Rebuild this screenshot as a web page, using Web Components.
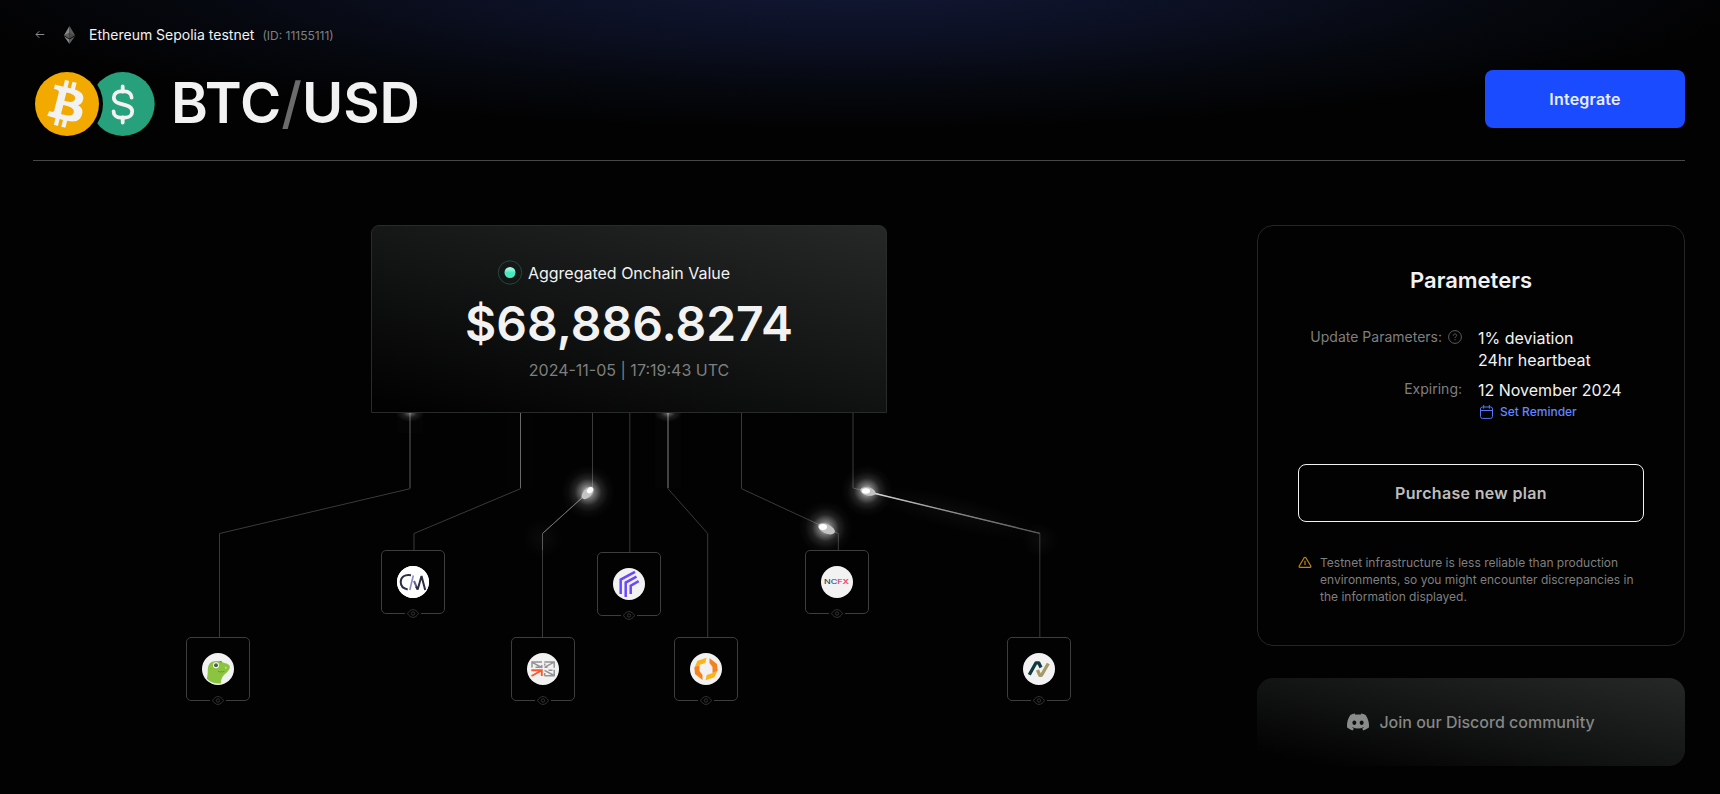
<!DOCTYPE html>
<html lang="en">
<head>
<meta charset="utf-8">
<title>BTC/USD</title>
<style>
html, body { margin: 0; background: #020202; }
body { font-family: Inter, "Liberation Sans", sans-serif; color: #f2f2f2; font-size: 16px; }
</style>
</head>
<body>
<feed-page></feed-page>

<script>
const define = (name, html) => {
  const t = document.createElement('template');
  t.innerHTML = html;
  customElements.define(name, class extends HTMLElement {
    constructor() {
      super();
      this.attachShadow({ mode: 'open' }).appendChild(t.content.cloneNode(true));
    }
  });
};

define('bread-crumb', `
<style>
:host { display: flex; align-items: center; height: 22px; font-size: 14px; line-height: 22px; }
.arrow { margin: -1px 19px 0 1.5px; }
.eth { margin: -1px 14.5px 0 0; }
.id { font-size: 12px; color: #808080; margin-left: 8px; padding-top: 2px; }
svg { display: block; }
</style>
<svg class="arrow" width="10" height="10" viewBox="0 0 10 10" fill="none" stroke="#8a8a8a"><path d="M9.300 4.500H1M4.300 1.200L1 4.500l3.300 3.300"/></svg>
<svg class="eth" width="11" height="18" viewBox="0 0 11 18"><path fill="#8a8a8a" d="M5.500 0L0 9.200l5.500 3.200z"/><path fill="#5c5c5c" d="M5.500 0L11 9.200l-5.500 3.200z"/><path fill="#3c3c3c" d="M5.500 6.600L0 9.200l5.500 3.200L11 9.200z" opacity=".6"/><path fill="#8a8a8a" d="M0 10.300L5.500 18v-4.500z"/><path fill="#5c5c5c" d="M11 10.300L5.500 18v-4.500z"/></svg>
<slot></slot><span class="id"><slot name="id"></slot></span>
`);

define('coin-pair', `
<style>
:host { display: block; width: 124px; height: 68px; }
svg { display: block; }
</style>
<svg width="124" height="68" viewBox="0 0 124 68">
  <circle cx="89.700" cy="34" r="32" fill="#26a17b"/>
  <circle cx="34" cy="34" r="36" fill="#020202"/>
  <circle cx="34" cy="34" r="32" fill="#f2a900"/>
  <g transform="translate(33 33.500) scale(2.400) translate(-16 -15.850)"><path fill="#f2f2f2" d="M23.189 14.02c.314-2.096-1.283-3.223-3.465-3.975l.708-2.84-1.728-.43-.69 2.765c-.454-.114-.92-.22-1.385-.326l.695-2.783L15.596 6l-.708 2.839c-.376-.086-.746-.17-1.104-.26l.002-.009-2.384-.595-.46 1.846s1.283.294 1.256.312c.7.175.826.638.805 1.006l-.806 3.235c.048.012.11.03.18.057l-.183-.045-1.13 4.532c-.086.212-.303.531-.793.41.018.025-1.256-.313-1.256-.313l-.858 1.978 2.25.561c.418.105.828.215 1.231.318l-.715 2.872 1.727.43.708-2.84c.472.127.93.245 1.378.357l-.706 2.828 1.728.43.715-2.866c2.948.558 5.164.333 6.097-2.333.752-2.146-.037-3.385-1.588-4.192 1.13-.26 1.98-1.003 2.207-2.538zm-3.95 5.538c-.533 2.147-4.148.986-5.32.695l.95-3.805c1.172.293 4.929.872 4.37 3.11zm.535-5.569c-.487 1.953-3.495.96-4.47.717l.86-3.45c.975.243 4.118.696 3.61 2.733z"/></g>
  <g fill="none" stroke="#f2f2f2" stroke-width="3.800" stroke-linecap="round"><path d="M89.700 16.500v5M89.700 47.500v5"/><path d="M98.600 27.500c0-3.400-3-6.200-7-6.200h-3.800c-4 0-7 2.800-7 6.200 0 3.100 2.100 5 5.400 5.900l7 1.900c3.800 1 6 3 6 6.200 0 3.600-3 6.100-7 6.100h-4.600c-4 0-7-2.600-7-6.200"/></g>
</svg>
`);

define('ui-button', `
<style>
:host { display: flex; align-items: center; justify-content: center; box-sizing: border-box; height: 58px; border-radius: 8px; font-size: 16px; font-weight: 600; line-height: 20px; letter-spacing: .2px; background: #1a4bff; color: #e8edff; }
:host([outline]) { background: none; border: 1px solid #f2f2f2; color: #bdbdbd; letter-spacing: .32px; }
</style><slot></slot>
`);

define('page-header', `
<style>
:host { display: block; border-bottom: 1px solid #474747; padding-top: 24px; height: 136px; }
.row { display: flex; margin-top: 24px; justify-content: space-between; }
.pair { display: flex; align-items: center; height: 68px; }
h1 { margin: -3px 0 0 14px; font-size: 56px; line-height: 68px; font-weight: 600; }
h1 span { color: #6b6b6b; font-weight: 500; }
ui-button { width: 200px; }
</style>
<bread-crumb>Ethereum Sepolia testnet<span slot="id">(ID: 11155111)</span></bread-crumb>
<div class="row">
  <div class="pair"><coin-pair></coin-pair><h1>BTC<span>/</span>USD</h1></div>
  <ui-button>Integrate</ui-button>
</div>
`);

define('value-card', `
<style>
:host { display: flex; flex-direction: column; align-items: center; box-sizing: border-box; width: 516px; height: 188px; padding-top: 35px; border: 1px solid #292a2a; border-radius: 8px 8px 0 0; background: linear-gradient(15deg, #020202 4%, #101111 42%, #262827 100%); }
.label { display: flex; align-items: center; height: 24px; gap: 5px; margin-right: 31px; }
.price { font-size: 48px; font-weight: 600; line-height: 58px; margin-top: 9.500px; white-space: nowrap; }
.date { color: #7d7f7e; line-height: 20px; margin-top: 7.500px; }
svg { display: block; }
</style>
<div class="label">
  <svg width="26" height="26" viewBox="0 0 26 26"><defs><linearGradient id="g" x2="0" y2="1"><stop offset=".2" stop-color="#9df5dc"/><stop offset=".5" stop-color="#4ae8bd"/></linearGradient></defs><circle cx="13" cy="12.500" r="11.700" fill="none" stroke="#21483d"/><circle cx="13" cy="12.500" r="5.500" fill="url(#g)"/></svg>
  <slot name="label"></slot>
</div>
<div class="price"><slot name="price"></slot></div>
<div class="date"><slot name="date"></slot></div>
`);

define('source-node', `
<style>
:host { display: grid; place-items: center; position: absolute; box-sizing: border-box; width: 64px; height: 64px; border: 1px solid #3d3d3d; border-radius: 5px; background: #020202; }
.logo { width: 32px; height: 32px; border-radius: 50%; background: #f2f2f2; overflow: hidden; }
.eye { position: absolute; left: 23px; bottom: -5px; width: 16px; height: 9px; background: #020202; }
svg { display: block; }
</style>
<div class="logo"><slot></slot></div>
<div class="eye"><svg width="16" height="9" viewBox="0 0 16 9" fill="none" stroke="#333"><path d="M2.500 4.500C4 2 5.800.600 8 .600s4 1.400 5.500 3.900C12 7 10.200 8.400 8 8.400S4 7 2.500 4.500z"/><circle cx="8" cy="4.500" r="1.700"/></svg></div>
`);

define('feed-diagram', `
<style>
:host { display: block; position: relative; height: 500px; }
.wires { position: absolute; left: 0; top: 0; width: 1192px; height: 500px; }
value-card { position: relative; margin: 0 auto; }
source-node svg { display: block; }
</style>
<svg class="wires" viewBox="33 225 1192 500" fill="none">
  <defs>
    <radialGradient id="glow"><stop offset="0" stop-color="#fff" stop-opacity=".85"/><stop offset=".25" stop-color="#fff" stop-opacity=".42"/><stop offset=".5" stop-color="#fff" stop-opacity=".13"/><stop offset=".75" stop-color="#fff" stop-opacity=".03"/><stop offset="1" stop-color="#fff" stop-opacity="0"/></radialGradient>
    <radialGradient id="soft"><stop offset="0" stop-color="#fff" stop-opacity=".4"/><stop offset=".5" stop-color="#fff" stop-opacity=".1"/><stop offset="1" stop-color="#fff" stop-opacity="0"/></radialGradient>
    <radialGradient id="faint"><stop offset="0" stop-color="#fff" stop-opacity=".035"/><stop offset="1" stop-color="#fff" stop-opacity="0"/></radialGradient>
    <linearGradient id="tail" gradientUnits="userSpaceOnUse" x1="868" y1="491" x2="1040" y2="533"><stop stop-color="#ddd"/><stop offset=".5" stop-color="#888"/><stop offset="1" stop-color="#555"/></linearGradient>
  </defs>
  <g stroke="#3a3a3a">
    <path d="M410 413V488.700L219.500 533.500V637"/>
    <path d="M520.500 413V488.700L414 533.500V550"/>
    <path d="M592.500 413V488L542.500 533.500V637"/>
    <path d="M629.800 413V552"/>
    <path d="M668 413V488.700L707.700 533.500V637"/>
    <path d="M741.500 413V488.700L838.300 533.500V550"/>
    <path d="M853 413V488L1039.800 533.300V637"/>
  </g>
  <path d="M410 413V488" stroke="#fff" stroke-opacity=".08" stroke-width="2"/>
  <path d="M520.500 413V488" stroke="#686868"/>
  <path d="M668 413V488" stroke="#4a4a4a" stroke-width="1.600"/>
  <path d="M583 497L542.500 533.500" stroke="#707070"/>
  <path d="M542.500 533.500V550" stroke="#555"/>
  <path d="M873 493L1039.800 533.300" stroke="url(#tail)" stroke-width="1.300"/>
  <ellipse cx="955" cy="513" rx="95" ry="17" fill="url(#faint)" transform="rotate(13.600 955 513)"/>
  <circle cx="542.500" cy="538" r="20" fill="url(#faint)"/>
  <circle cx="1040" cy="540" r="18" fill="url(#faint)"/>
  <ellipse cx="410" cy="413" rx="14" ry="9" fill="url(#soft)"/>
  <ellipse cx="668" cy="413" rx="14" ry="9" fill="url(#soft)"/>
  <rect x="397" y="413" width="26" height="20" fill="#fff" fill-opacity=".01"/>
  <rect x="507" y="413" width="26" height="75" fill="#fff" fill-opacity=".006"/>
  <rect x="655" y="413" width="26" height="75" fill="#fff" fill-opacity=".01"/>
  <circle cx="588" cy="492" r="27" fill="url(#glow)"/>
  <circle cx="825.500" cy="528" r="27" fill="url(#glow)"/>
  <circle cx="867" cy="491" r="26" fill="url(#glow)"/>
  <ellipse cx="587.600" cy="493" rx="7.600" ry="4.200" transform="rotate(-45 587.600 493)" fill="#c4c4c4"/>
  <ellipse cx="590" cy="490.300" rx="3.600" ry="2.600" transform="rotate(-45 590 490.300)" fill="#fff"/>
  <ellipse cx="826.500" cy="528.800" rx="9" ry="4.600" transform="rotate(25 826.500 528.800)" fill="#c4c4c4"/>
  <ellipse cx="823" cy="527" rx="4" ry="3" fill="#fff"/>
  <ellipse cx="868" cy="491.500" rx="7.800" ry="4" transform="rotate(14 868 491.500)" fill="#c4c4c4"/>
  <ellipse cx="866" cy="491" rx="4" ry="2.800" fill="#fff"/>
</svg>

<value-card>
  <span slot="label">Aggregated Onchain Value</span>
  <span slot="price">$68,886.8274</span>
  <span slot="date">2024-11-05 | 17:19:43 UTC</span>
</value-card>

<source-node style="left:153px;top:412px"><svg width="32" height="32" viewBox="0 0 32 32"><path fill="#8bc53f" d="M4.800 25.500C6.500 20 5 17 6.500 12.500 8 8.500 13 7.300 18 8.500c3 1 8 2 9.500 4 1.100 2.500-1 6-4.500 8.500-2.500 2-4 5-4.200 9.500C14 31 8 29.500 4.800 25.500z"/><circle cx="14" cy="12.200" r="3" fill="#fff"/><circle cx="14" cy="12.200" r="2" fill="#58595b"/><path d="M17.500 8.300l2.500.7" stroke="#3f8f6b"/><circle cx="23.800" cy="14.800" r="1" fill="#c0e08c"/><path d="M16 18.300c2 .8 4 .8 6.500 0" stroke="#6a9a30" fill="none"/></svg></source-node>
<source-node style="left:348px;top:325px"><svg width="32" height="32" viewBox="0 0 32 32" fill="none" stroke-width="2"><rect width="32" height="32" fill="#fff"/><path stroke="#2b2d42" d="M14 9.200C8 8 3.700 11 3.700 16c0 4 2.800 6.700 7 7.400"/><path stroke="#8a8cc0" stroke-width="1.600" d="M16.300 9.500L12.800 24"/><path stroke="#5f6290" d="M17 15l3.500 8"/><path stroke="#2b2d42" stroke-linejoin="bevel" d="M19 20.500l1.700 3L24.500 10l3.700 14"/></svg></source-node>
<source-node style="left:564px;top:327px"><svg width="32" height="32" viewBox="0 0 32 32" fill="none" stroke="#6b47ff" stroke-width="2.500"><path d="M22 3.800L7.700 11.600V26"/><path d="M23.500 8.600l-10.800 6V29"/><path d="M25.700 13.200l-8 4.500V26"/></svg></source-node>
<source-node style="left:478px;top:412px"><svg width="32" height="32" viewBox="0 0 32 32" fill="none" stroke="#949494" stroke-width="1.500"><path d="M15 9H5v5.500M5.200 9.300l9.600 5.200M8.500 14.300h6.300V12"/><path d="M17.300 9h9.900v5.700M27 9.200l-9.500 5.200M17.700 10.500v2M17.500 14.300h3"/><path d="M27.200 16.800v6H17.500M27 22.500l-9.500-5.200M17.700 20v2.800M21.500 17.200h4"/><path stroke="#fc5a2d" stroke-width="1.900" d="M4.300 17.300h10.500V23M14.500 17.500l-10 5.500"/></svg></source-node>
<source-node style="left:641px;top:412px"><svg width="32" height="32" viewBox="0 0 32 32"><path fill="#fbb41c" d="M16.500 4.800L7.500 7.800 4.300 15l5-3 6-2z"/><path fill="#f58220" d="M9.500 12L4.300 14.500 5 21l7.500 6v-5l-3-4z"/><g transform="rotate(180 16 16)"><path fill="#fbb41c" d="M16.500 4.800L7.500 7.800 4.300 15l5-3 6-2z"/><path fill="#f58220" d="M9.500 12L4.300 14.500 5 21l7.500 6v-5l-3-4z"/></g></svg></source-node>
<source-node style="left:772px;top:325px"><svg width="32" height="32" viewBox="0 0 32 32" font-family="Inter, sans-serif" font-size="6" font-weight="500"><g transform="translate(3 18.200) scale(1.480 1)"><text fill="#444">NC<tspan fill="#f0507c" font-weight="700">FX</tspan></text></g></svg></source-node>
<source-node style="left:974px;top:412px"><svg width="32" height="32" viewBox="0 0 32 32" fill="none" stroke-width="3.300" stroke-linejoin="round"><path stroke="#0f3b3d" d="M6.300 21.800L13 9.800h2.700l2.300 4.700"/><path stroke="#a59a68" d="M14.500 17l2.300 5.300h1.700l6.800-11.800"/></svg></source-node>
`);

define('param-row', `
<style>
:host { display: grid; grid-template-columns: 165px 1fr; column-gap: 15px; line-height: 22px; }
.k { display: flex; justify-content: flex-end; align-items: center; gap: 6px; height: 22px; margin: -1px 1px 0 0; font-size: 14px; color: #7f7f7f; white-space: nowrap; }
.v { white-space: nowrap; }
</style>
<div class="k"><slot name="k"></slot></div><div class="v"><slot></slot></div>
`);

define('params-panel', `
<style>
:host { display: block; box-sizing: border-box; height: 421px; padding: 40px; border: 1px solid #252525; border-radius: 16px; background: #020202; }
h2 { margin: 0; text-align: center; font-size: 22px; line-height: 28px; font-weight: 600; }
.rows { display: grid; gap: 8px; margin: 33px 0 0 0; }
.rem { display: flex; align-items: center; gap: 7px; margin: 0 0 0 2px; height: 22px; color: #6385ff; font-size: 12px; font-weight: 500; }
ui-button { margin-top: 41px; }
.warn { display: flex; gap: 8px; margin-top: 32px; font-size: 12px; line-height: 17px; color: #7f7f7f; white-space: nowrap; }
.warn svg { flex: none; margin-top: 2px; }
svg { display: block; }
</style>
<h2>Parameters</h2>
<div class="rows">
  <param-row><span slot="k">Update Parameters:</span><svg slot="k" width="14" height="14" viewBox="0 0 14 14" fill="none" stroke="#5c5c5c"><circle cx="7" cy="7" r="6.400"/><path d="M5.300 5.700c0-1 .7-1.700 1.700-1.700s1.700.6 1.700 1.500c0 1.200-1.700 1.200-1.700 2.500M7 9.200v1.100"/></svg>1% deviation<br>24hr heartbeat</param-row>
  <param-row><span slot="k">Expiring:</span>12 November 2024<div class="rem"><svg width="13" height="14" viewBox="0 0 13 14" fill="none" stroke="#5578f5"><rect x=".5" y="2" width="12" height="11.400" rx="2"/><path d="M.5 5.500h12M3.700 0v3.700M9.300 0v3.700"/></svg>Set Reminder</div></param-row>
</div>
<ui-button outline>Purchase new plan</ui-button>
<div class="warn"><svg width="14" height="13" viewBox="0 0 14 13" fill="none" stroke="#c58511" stroke-width="1.200" stroke-linejoin="round"><path d="M6.200 1.700L1.200 10c-.3.600 0 1.300.7 1.300h10.200c.7 0 1-.7.7-1.300L7.800 1.700c-.4-.6-1.200-.6-1.600 0zM7 4.800V9"/></svg><div>Testnet infrastructure is less reliable than production<br>environments, so you might encounter discrepancies in<br>the information displayed.</div></div>
`);

define('discord-card', `
<style>
:host { display: flex; align-items: center; justify-content: center; gap: 10px; height: 88px; border-radius: 16px; font-weight: 500; color: #858786; background: linear-gradient(12deg, #020202 8%, #101111 42%, #262827 100%); }
svg { display: block; }
</style>
<svg width="22" height="22" viewBox="0 0 24 24" fill="#8a8c8b"><path d="M20.317 4.3698a19.7913 19.7913 0 00-4.8851-1.5152.0741.0741 0 00-.0785.0371c-.211.3753-.4447.8648-.6083 1.2495-1.8447-.2762-3.68-.2762-5.4868 0-.1636-.3933-.4058-.8742-.6177-1.2495a.077.077 0 00-.0785-.037 19.7363 19.7363 0 00-4.8852 1.515.0699.0699 0 00-.0321.0277C.5334 9.0458-.319 13.5799.0992 18.0578a.0824.0824 0 00.0312.0561c2.0528 1.5076 4.0413 2.4228 5.9929 3.0294a.0777.0777 0 00.0842-.0276c.4616-.6304.8731-1.2952 1.226-1.9942a.076.076 0 00-.0416-.1057c-.6528-.2476-1.2743-.5495-1.8722-.8923a.077.077 0 01-.0076-.1277c.1258-.0943.2517-.1923.3718-.2914a.0743.0743 0 01.0776-.0105c3.9278 1.7933 8.18 1.7933 12.0614 0a.0739.0739 0 01.0785.0095c.1202.099.246.1981.3728.2924a.077.077 0 01-.0066.1276 12.2986 12.2986 0 01-1.873.8914.0766.0766 0 00-.0407.1067c.3604.698.7719 1.3628 1.225 1.9932a.076.076 0 00.0842.0286c1.961-.6067 3.9495-1.5219 6.0023-3.0294a.077.077 0 00.0313-.0552c.5004-5.177-.8382-9.6739-3.5485-13.6604a.061.061 0 00-.0312-.0286zM8.02 15.3312c-1.1825 0-2.1569-1.0857-2.1569-2.419 0-1.3332.9555-2.4189 2.157-2.4189 1.2108 0 2.1757 1.0952 2.1568 2.419 0 1.3332-.9555 2.4189-2.1569 2.4189zm7.9748 0c-1.1825 0-2.1569-1.0857-2.1569-2.419 0-1.3332.9554-2.4189 2.1569-2.4189 1.2108 0 2.1757 1.0952 2.1568 2.419 0 1.3332-.946 2.4189-2.1568 2.4189Z"/></svg>
<slot></slot>
`);

define('feed-page', `
<style>
:host { display: block; box-sizing: border-box; height: 794px; overflow: hidden; padding: 0 35px 0 33px; background: radial-gradient(ellipse 920px 150px at 850px -20px, #131835 0%, #0d1126 35%, #06080f 72%, rgba(2,2,2,0) 100%) #020202; }
main { display: grid; grid-template-columns: 1192px 428px; column-gap: 32px; margin-top: 64px; }
aside { display: grid; gap: 32px; align-content: start; }
</style>
<page-header></page-header>
<main>
  <feed-diagram></feed-diagram>
  <aside><params-panel></params-panel><discord-card>Join our Discord community</discord-card></aside>
</main>
`);
</script>
</body>
</html>
